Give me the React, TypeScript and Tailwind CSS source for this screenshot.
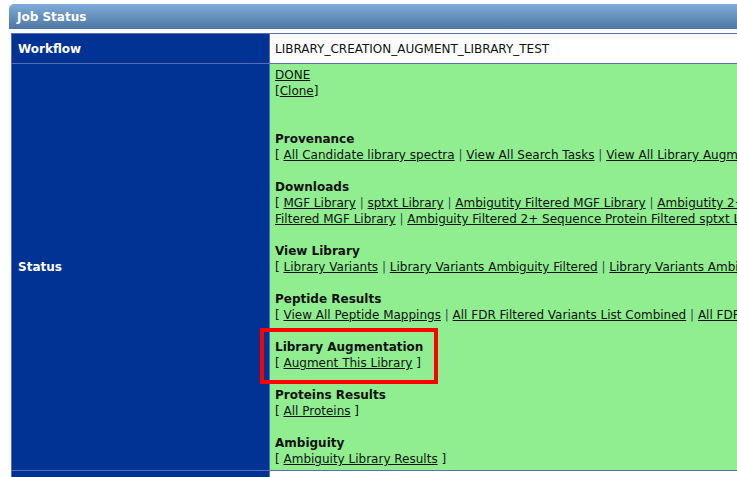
import React from "react";

type LinkGroup = { title: string; lines: string[][] };

const groups: LinkGroup[] = [
  {
    title: "Provenance",
    lines: [["All Candidate library spectra", "View All Search Tasks", "View All Library Augmentation Tasks"]],
  },
  {
    title: "Downloads",
    lines: [
      ["MGF Library", "sptxt Library", "Ambigutity Filtered MGF Library", "Ambigutity 2+ Sequence Protein"],
      ["Filtered MGF Library", "Ambiguity Filtered 2+ Sequence Protein Filtered sptxt Library"],
    ],
  },
  {
    title: "View Library",
    lines: [["Library Variants", "Library Variants Ambiguity Filtered", "Library Variants Ambiguity Filtered 2+"]],
  },
  {
    title: "Peptide Results",
    lines: [["View All Peptide Mappings", "All FDR Filtered Variants List Combined", "All FDR Filtered Peptides"]],
  },
];

const Links = ({ items, first, last }: { items: string[]; first: boolean; last: boolean }) => (
  <div className="whitespace-nowrap">
    {first && "[ "}
    {items.map((t, i) => (
      <span key={t}>
        {i > 0 && <span className="text-[#3a4a55]"> | </span>}
        <a href="#" className="underline text-[#111]">
          {t}
        </a>
      </span>
    ))}
    {last && " ]"}
  </div>
);

const Section = ({ title, lines }: { title: string; lines: string[][] }) => (
  <div className="mb-4">
    <div className="font-bold">{title}</div>
    {lines.map((l, i) => (
      <Links key={i} items={l} first={i === 0} last={i === lines.length - 1} />
    ))}
  </div>
);

export default function App() {
  return (
    <div className="w-[737px] h-[477px] overflow-hidden bg-white pl-[9px] pt-1 font-['DejaVu_Sans',sans-serif] text-[12px] leading-4 text-[#111]">
      <div className="w-[760px] h-[25px] rounded-tl-[5px] bg-gradient-to-b from-[#80acd8] to-[#4e77a4] text-white font-bold px-2 flex items-center">
        Job Status
      </div>
      <table className="mt-1 ml-[2px] border-collapse table-fixed w-[900px]">
        <colgroup>
          <col className="w-[258px]" />
          <col />
        </colgroup>
        <tbody>
          <tr>
            <td className="bg-[#003393] text-white font-bold px-[6px] h-[30px] border border-[#5a6db5]">
              Workflow
            </td>
            <td className="bg-white px-[5px] border border-[#5a6db5]">
              LIBRARY_CREATION_AUGMENT_LIBRARY_TEST
            </td>
          </tr>
          <tr>
            <td className="bg-[#003393] text-white font-bold px-[6px] border border-[#5a6db5]">Status</td>
            <td className="bg-[#90ee90] px-[5px] pt-[3px] pb-[3px] border border-[#5a6db5] align-top">
              <div>
                <a href="#" className="underline">DONE</a>
              </div>
              <div>
                [<a href="#" className="underline">Clone</a>]
              </div>
              <div className="h-8" />
              {groups.map((g) => (
                <Section key={g.title} title={g.title} lines={g.lines} />
              ))}
              <div className="relative mb-4">
                <div className="font-bold">Library Augmentation</div>
                <Links items={["Augment This Library"]} first last />
                <span className="absolute left-[-15px] top-[-11px] w-[178px] h-[56px] border-4 border-[#ff0000]" />
              </div>
              <Section title="Proteins Results" lines={[["All Proteins"]]} />
              <div>
                <div className="font-bold">Ambiguity</div>
                <Links items={["Ambiguity Library Results"]} first last />
              </div>
            </td>
          </tr>
          <tr>
            <td className="bg-[#003393] h-[30px] border border-[#5a6db5]" />
            <td className="bg-white border border-[#5a6db5]" />
          </tr>
        </tbody>
      </table>
    </div>
  );
}
